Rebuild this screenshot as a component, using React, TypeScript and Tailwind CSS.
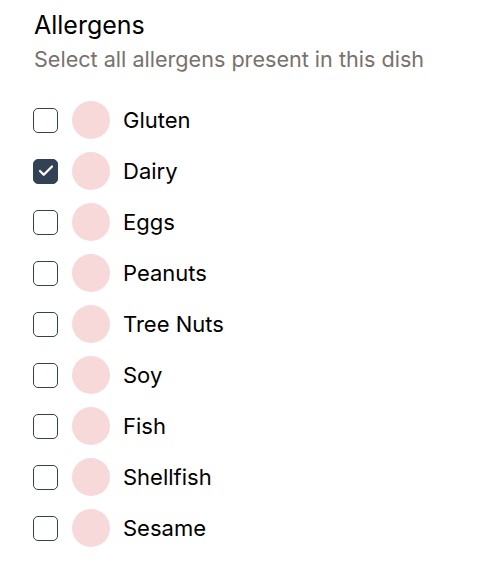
import { ReactElement } from "react";

const allergens = [
  { name: "Gluten", checked: false },
  { name: "Dairy", checked: true },
  { name: "Eggs", checked: false },
  { name: "Peanuts", checked: false },
  { name: "Tree Nuts", checked: false },
  { name: "Soy", checked: false },
  { name: "Fish", checked: false },
  { name: "Shellfish", checked: false },
  { name: "Sesame", checked: false },
];

export default function App(): ReactElement {
  return (
    <section className="w-[496px] h-[584px] bg-white px-[34px] pt-[9px] font-['Inter',sans-serif]">
      <h2 className="text-[25px] leading-[32px] text-black">Allergens</h2>
      <p className="mt-[2px] text-[21.6px] leading-[32px] text-[#78716c]">
        Select all allergens present in this dish
      </p>
      <ul className="mt-[26px] flex flex-col gap-[13px]">
        {allergens.map((a) => (
          <AllergenRow key={a.name} name={a.name} checked={a.checked} />
        ))}
      </ul>
    </section>
  );
}

const AllergenRow = ({ name, checked }: { name: string; checked: boolean }) => {
  return (
    <li className="flex items-center h-[38px]">
      <span
        className={
          checked
            ? "flex items-center justify-center w-[25px] h-[25px] rounded-[5px] border border-[#334155] bg-[#334155] -ml-[1px]"
            : "flex items-center justify-center w-[25px] h-[25px] rounded-[5px] border border-[#334155] bg-white -ml-[1px]"
        }
      >
        {checked && (
          <svg width="18" height="18" viewBox="0 0 24 24" fill="none" stroke="white" strokeWidth="3" strokeLinecap="round" strokeLinejoin="round">
            <path d="M20 6 9 17l-5-5" />
          </svg>
        )}
      </span>
      <span className="ml-[14px] w-[38px] h-[38px] rounded-full bg-[#f8d9da]" />
      <span className="ml-[13px] text-[22px] text-black">{name}</span>
    </li>
  );
};
